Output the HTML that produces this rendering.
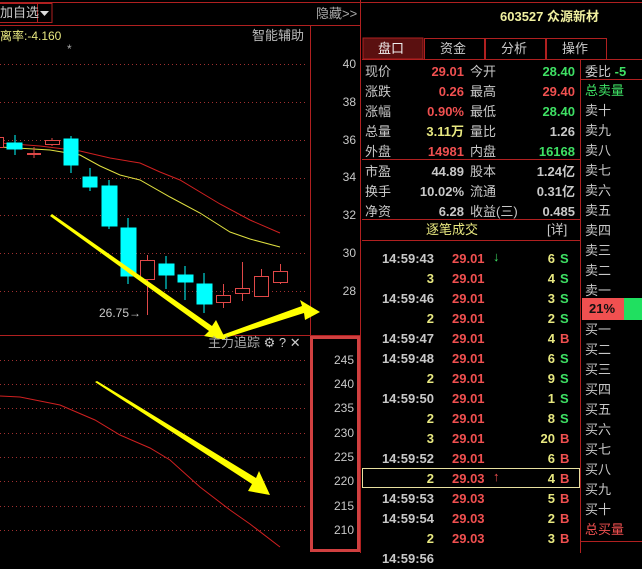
<!DOCTYPE html>
<html><head><meta charset="utf-8"><style>
*{margin:0;padding:0;box-sizing:border-box}
body{width:642px;height:553px;background:#000;overflow:hidden;position:relative;font-family:"Liberation Sans","Noto Sans CJK SC",sans-serif;font-size:13px;color:#c8c8c8}
.a{position:absolute;white-space:nowrap;line-height:16px}
.r{text-align:right}
.g{color:#c8c8c8}.red{color:#f05050}.grn{color:#3ee064}.yel{color:#e8e880}
.b{font-weight:bold}
</style></head><body>
<svg class="a" style="left:0;top:0" width="642" height="553">
<line x1="0" y1="2.5" x2="642" y2="2.5" stroke="#b02020"/>
<line x1="0" y1="25.5" x2="360" y2="25.5" stroke="#b02020"/>
<rect x="-1" y="3.5" width="53" height="19" fill="none" stroke="#b02020"/>
<line x1="37.5" y1="4" x2="37.5" y2="22" stroke="#b02020"/>
<polygon points="40,11 49,11 44.5,16" fill="#ddd"/>
<line x1="310.5" y1="25" x2="310.5" y2="336" stroke="#b02020"/>
<line x1="360.5" y1="0" x2="360.5" y2="553" stroke="#b02020"/>
<line x1="0" y1="335.5" x2="360" y2="335.5" stroke="#b02020"/>
<g stroke="#a03030" stroke-dasharray="1,3">
<line x1="0" y1="64.5" x2="308" y2="64.5"/><line x1="0" y1="102.5" x2="308" y2="102.5"/>
<line x1="0" y1="140.5" x2="308" y2="140.5"/><line x1="0" y1="178.5" x2="308" y2="178.5"/>
<line x1="0" y1="215.5" x2="308" y2="215.5"/><line x1="0" y1="253.5" x2="308" y2="253.5"/>
<line x1="0" y1="291.5" x2="308" y2="291.5"/>
<line x1="0" y1="360.5" x2="308" y2="360.5"/><line x1="0" y1="384.5" x2="308" y2="384.5"/>
<line x1="0" y1="408.5" x2="308" y2="408.5"/><line x1="0" y1="433.5" x2="308" y2="433.5"/>
<line x1="0" y1="457.5" x2="308" y2="457.5"/><line x1="0" y1="481.5" x2="308" y2="481.5"/>
<line x1="0" y1="506.5" x2="308" y2="506.5"/><line x1="0" y1="530.5" x2="308" y2="530.5"/>
</g>
<rect x="311.5" y="337.5" width="47" height="213" fill="none" stroke="#d04040" stroke-width="3"/>
<!-- MA lines -->
<polyline fill="none" stroke="#d02020" points="0,143 40,146 80,151 110,158 140,163 160,172 180,180 220,204 250,220 280,233"/>
<polyline fill="none" stroke="#e0e040" points="0,147 50,150 80,155 100,166 120,175 140,180 170,197 200,213 230,232 250,239 280,247"/>
<!-- candles -->
<g stroke="#00ffff" fill="#00ffff">
<line x1="15" y1="135" x2="15" y2="155"/><rect x="7" y="143" width="15" height="6"/>
<line x1="71" y1="136" x2="71" y2="173"/><rect x="64" y="139" width="14" height="26"/>
<line x1="90" y1="168" x2="90" y2="191"/><rect x="83" y="177" width="14" height="10"/>
<line x1="109" y1="180" x2="109" y2="229"/><rect x="102" y="186" width="15" height="40"/>
<line x1="128" y1="218" x2="128" y2="284"/><rect x="121" y="228" width="15" height="48"/>
<line x1="166" y1="256" x2="166" y2="289"/><rect x="159" y="264" width="15" height="11"/>
<line x1="185" y1="266" x2="185" y2="300"/><rect x="178" y="275" width="15" height="7"/>
<line x1="204" y1="273" x2="204" y2="313"/><rect x="197" y="284" width="15" height="20"/>
</g>
<g stroke="#e04848" fill="#000">
<rect x="-2.5" y="137.5" width="6" height="10"/>
<line x1="34" y1="147" x2="34" y2="158"/><rect x="27.5" y="153.5" width="13" height="1" fill="#e04848"/>
<line x1="52" y1="138" x2="52" y2="146"/><rect x="45.5" y="140.5" width="14" height="4"/>
<line x1="147.5" y1="255" x2="147.5" y2="315"/><rect x="140.5" y="260.5" width="14" height="19"/>
<line x1="223.5" y1="284" x2="223.5" y2="308"/><rect x="216.5" y="295.5" width="14" height="7"/>
<line x1="242.5" y1="262" x2="242.5" y2="301"/><rect x="235.5" y="288.5" width="14" height="5"/>
<line x1="261.5" y1="269" x2="261.5" y2="297"/><rect x="254.5" y="276.5" width="14" height="20"/>
<line x1="280.5" y1="264" x2="280.5" y2="284"/><rect x="273.5" y="271.5" width="14" height="11"/>
</g>
<!-- lower line -->
<polyline fill="none" stroke="#d02020" points="0,396 20,397 60,405 95,420 120,435 150,448 170,460 200,487 230,510 250,524 280,547"/>
<!-- arrows -->
<g fill="#ffff00">
<polygon points="50,216 52,214 212,326 216,320 226,340 204,336 209,331"/>
<polygon points="222,339 222,335 302,306 300,300 320,312 305,320 304,313"/>
<polygon points="95,382 97,381 256,478 259,471 270,495 248,491 252,484"/>
</g>
<polygon points="592,291 592,289 592,291" fill="none"/>
<!-- right panel lines -->
<line x1="362" y1="59.5" x2="642" y2="59.5" stroke="#b02020"/>
<rect x="363" y="38" width="60" height="21" fill="#5a1010" stroke="#b02020"/>
<rect x="424.5" y="38.5" width="60" height="21" fill="none" stroke="#b02020"/>
<rect x="485.5" y="38.5" width="60" height="21" fill="none" stroke="#b02020"/>
<rect x="546.5" y="38.5" width="60" height="21" fill="none" stroke="#b02020"/>
<line x1="580.5" y1="60" x2="580.5" y2="553" stroke="#b02020"/>
<line x1="362" y1="159.5" x2="580" y2="159.5" stroke="#b02020"/>
<line x1="362" y1="219.5" x2="580" y2="219.5" stroke="#b02020"/>
<line x1="362" y1="240.5" x2="580" y2="240.5" stroke="#b02020"/>
<line x1="580" y1="79.5" x2="642" y2="79.5" stroke="#b02020"/>
<line x1="580" y1="541.5" x2="642" y2="541.5" stroke="#b02020"/>
<rect x="582" y="298" width="42" height="22" fill="#f05050"/>
<rect x="624" y="298" width="18" height="22" fill="#20e060"/>
<rect x="362.5" y="468.5" width="217" height="19" fill="none" stroke="#e8e0a0"/>
</svg>

<div class="a" style="left:0;top:5;top:5px;color:#ccc">加自选</div>
<div class="a" style="left:316px;top:6px;color:#aaa">隐藏&gt;&gt;</div>
<div class="a yel" style="left:0;top:28px;font-size:12px">离率:-4.160</div>
<div class="a" style="left:252px;top:28px;color:#bbb">智能辅助</div>
<div class="a" style="left:67px;top:41px;color:#aaa;font-size:12px">*</div>
<div class="a g" style="left:99px;top:305px;font-size:12px">26.75→</div>
<div class="a" style="left:208px;top:335px;color:#aaa">主力追踪 <span style="color:#ccc">⚙ ? ✕</span></div>

<div class="a r" style="left:318px;width:38px;top:56px;font-size:12px">40</div>
<div class="a r" style="left:318px;width:38px;top:94px;font-size:12px">38</div>
<div class="a r" style="left:318px;width:38px;top:132px;font-size:12px">36</div>
<div class="a r" style="left:318px;width:38px;top:169px;font-size:12px">34</div>
<div class="a r" style="left:318px;width:38px;top:207px;font-size:12px">32</div>
<div class="a r" style="left:318px;width:38px;top:245px;font-size:12px">30</div>
<div class="a r" style="left:318px;width:38px;top:283px;font-size:12px">28</div>
<div class="a r" style="left:316px;width:38px;top:352px;font-size:12px">245</div>
<div class="a r" style="left:316px;width:38px;top:376px;font-size:12px">240</div>
<div class="a r" style="left:316px;width:38px;top:400px;font-size:12px">235</div>
<div class="a r" style="left:316px;width:38px;top:425px;font-size:12px">230</div>
<div class="a r" style="left:316px;width:38px;top:449px;font-size:12px">225</div>
<div class="a r" style="left:316px;width:38px;top:473px;font-size:12px">220</div>
<div class="a r" style="left:316px;width:38px;top:498px;font-size:12px">215</div>
<div class="a r" style="left:316px;width:38px;top:522px;font-size:12px">210</div>

<div class="a b" style="left:500px;top:9px;color:#f0f0a0">603527 众源新材</div>
<div class="a" style="left:378px;top:41px;color:#f0f0f0">盘口</div>
<div class="a" style="left:440px;top:41px;color:#ccc">资金</div>
<div class="a" style="left:501px;top:41px;color:#ccc">分析</div>
<div class="a" style="left:562px;top:41px;color:#ccc">操作</div>

<div class="a g" style="left:365px;top:62px;line-height:20px">现价<br>涨跌<br>涨幅<br>总量<br>外盘</div>
<div class="a r b" style="left:400px;width:64px;top:62px;line-height:20px"><span class="red">29.01</span><br><span class="red">0.26</span><br><span class="red">0.90%</span><br><span class="yel">3.11万</span><br><span class="red">14981</span></div>
<div class="a g" style="left:470px;top:62px;line-height:20px">今开<br>最高<br>最低<br>量比<br>内盘</div>
<div class="a r b" style="left:510px;width:65px;top:62px;line-height:20px"><span class="grn">28.40</span><br><span class="red">29.40</span><br><span class="grn">28.40</span><br><span class="g">1.26</span><br><span class="grn">16168</span></div>
<div class="a g" style="left:365px;top:162px;line-height:20px">市盈<br>换手<br>净资</div>
<div class="a r b g" style="left:400px;width:64px;top:162px;line-height:20px">44.89<br>10.02%<br>6.28</div>
<div class="a g" style="left:470px;top:162px;line-height:20px">股本<br>流通<br>收益(三)</div>
<div class="a r b g" style="left:510px;width:65px;top:162px;line-height:20px">1.24亿<br>0.31亿<br>0.485</div>
<div class="a yel" style="left:426px;top:222px">逐笔成交</div>
<div class="a g" style="left:547px;top:222px">[详]</div>

<div class="a g" style="left:585px;top:62px;line-height:20px">委比 <b class="grn">-5</b></div>
<div class="a" style="left:585px;top:81px;line-height:20px"><span class="grn">总卖量</span><br>卖十<br>卖九<br>卖八<br>卖七<br>卖六<br>卖五<br>卖四<br>卖三<br>卖二<br>卖一</div>
<div class="a b" style="left:589px;top:301px;color:#111">21%</div>
<div class="a" style="left:585px;top:320px;line-height:20px">买一<br>买二<br>买三<br>买四<br>买五<br>买六<br>买七<br>买八<br>买九<br>买十<br><span class="red">总买量</span></div>

<div class="a r b g" style="left:365px;width:69px;top:249px;line-height:20px">14:59:43<br><span class="yel">3</span><br>14:59:46<br><span class="yel">2</span><br>14:59:47<br>14:59:48<br><span class="yel">2</span><br>14:59:50<br><span class="yel">2</span><br><span class="yel">3</span><br>14:59:52<br><span class="yel">2</span><br>14:59:53<br>14:59:54<br><span class="yel">2</span><br>14:59:56</div>
<div class="a b red" style="left:452px;top:249px;line-height:20px">29.01<br>29.01<br>29.01<br>29.01<br>29.01<br>29.01<br>29.01<br>29.01<br>29.01<br>29.01<br>29.01<br>29.03<br>29.03<br>29.03<br>29.03</div>
<div class="a b grn" style="left:493px;top:249px">↓</div>
<div class="a b red" style="left:493px;top:469px">↑</div>
<div class="a r b yel" style="left:520px;width:35px;top:249px;line-height:20px">6<br>4<br>3<br>2<br>4<br>6<br>9<br>1<br>8<br>20<br>6<br>4<br>5<br>2<br>3</div>
<div class="a b" style="left:560px;top:249px;line-height:20px"><span class="grn">S<br>S<br>S<br>S</span><br><span class="red">B</span><br><span class="grn">S<br>S<br>S<br>S</span><br><span class="red">B<br>B<br>B<br>B<br>B<br>B</span></div>
</body></html>
